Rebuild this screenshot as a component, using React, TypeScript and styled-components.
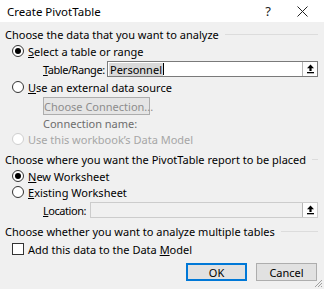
import React from 'react';
import styled, { createGlobalStyle } from 'styled-components';

const GlobalStyle = createGlobalStyle`
  html, body {
    margin: 0;
    padding: 0;
    background: #f0f0f0;
  }
  body {
    font-family: "Noto Sans", "Open Sans", sans-serif;
    font-size: 11px;
    color: #000;
  }
`;

const Window = styled.div`
  position: relative;
  width: 324px;
  height: 289px;
  background: #f0f0f0;
  overflow: hidden;
  display: flex;
  flex-direction: column;
`;

const TitleBar = styled.div`
  height: 22px;
  background: #fff;
  display: flex;
  align-items: center;
  padding: 0 5px 0 7px;
`;

const Title = styled.span`
  flex: 1;
  font-size: 11.5px;
`;

const TitleButton = styled.div`
  width: 34px;
  height: 22px;
  display: flex;
  align-items: center;
  justify-content: center;
  font-size: 13px;
  color: #222;
`;

const Body = styled.div`
  display: flex;
  flex-direction: column;
  padding: 4px 6px 0 5px;
`;

const SectionHeader = styled.div<{ $top?: number }>`
  height: 16px;
  margin-top: ${p => p.$top ?? 0}px;
  display: flex;
  align-items: center;
  gap: 6px;
  white-space: nowrap;

  &::after {
    content: '';
    flex: 1;
    height: 1px;
    background: #dcdcdc;
  }
`;

const OptionRow = styled.label<{ $top?: number; $disabled?: boolean }>`
  height: 16px;
  margin-top: ${p => p.$top ?? 0}px;
  padding-left: 7px;
  display: flex;
  align-items: center;
  gap: 4px;
  color: ${p => (p.$disabled ? '#a6a6a6' : '#000')};
  white-space: nowrap;
`;

const Radio = styled.span<{ $checked?: boolean; $disabled?: boolean }>`
  width: 12px;
  height: 12px;
  box-sizing: border-box;
  border-radius: 50%;
  border: 1px solid ${p => (p.$disabled ? '#cfcfcf' : '#333')};
  background: #fff;
  display: flex;
  align-items: center;
  justify-content: center;
  flex-shrink: 0;

  &::after {
    content: '';
    width: 6px;
    height: 6px;
    border-radius: 50%;
    background: ${p => (p.$checked ? '#000' : 'transparent')};
  }
`;

const Checkbox = styled.span`
  width: 12px;
  height: 12px;
  box-sizing: border-box;
  border: 1px solid #333;
  background: #fff;
  flex-shrink: 0;
`;

const FieldRow = styled.div<{ $top?: number; $label: number }>`
  height: 16px;
  margin-top: ${p => p.$top ?? 0}px;
  padding-left: 38px;
  display: grid;
  grid-template-columns: ${p => p.$label}px 1fr;
  align-items: center;
  white-space: nowrap;
`;

const FieldLabel = styled.span`
  letter-spacing: -0.45px;
`;

const Input = styled.div<{ $disabled?: boolean }>`
  height: 16px;
  box-sizing: border-box;
  border: 1px solid ${p => (p.$disabled ? '#cccccc' : '#7a7a7a')};
  background: ${p => (p.$disabled ? '#f0f0f0' : '#fff')};
  display: flex;
  align-items: center;
  padding-left: 1px;
`;

const InputText = styled.span`
  flex: 1;
  display: flex;
  align-items: center;
`;

const Selected = styled.span`
  background: #d9d9d9;
  padding: 0 1px;
  line-height: 13px;
`;

const Caret = styled.span`
  width: 1px;
  height: 12px;
  background: #000;
`;

const PickButton = styled.span`
  width: 15px;
  height: 14px;
  box-sizing: border-box;
  border-left: 1px solid #b5b5b5;
  background: #fdfdfd;
  display: flex;
  align-items: center;
  justify-content: center;
`;

const IndentBlock = styled.div<{ $top?: number }>`
  padding-left: 38px;
  margin-top: ${p => p.$top ?? 0}px;
  display: flex;
  flex-direction: column;
  align-items: flex-start;
`;

const PushButton = styled.button<{ $default?: boolean; $width: number; $disabled?: boolean }>`
  width: ${p => p.$width}px;
  height: 18px;
  box-sizing: border-box;
  margin: 0;
  padding: 0;
  flex-shrink: 0;
  text-align: center;
  white-space: nowrap;
  font-family: inherit;
  font-size: 11px;
  color: ${p => (p.$disabled ? '#8d8d8d' : '#000')};
  background: ${p => (p.$disabled ? '#e5e5e5' : '#e1e1e1')};
  border: 1px solid ${p => (p.$default ? '#0078d7' : '#adadad')};
  box-shadow: ${p => (p.$default ? 'inset 0 0 0 1px #0078d7' : 'none')};
`;

const Hint = styled.div`
  height: 16px;
  display: flex;
  align-items: center;
  color: #6d6d6d;
`;

const Footer = styled.div`
  margin-top: 6px;
  display: flex;
  justify-content: flex-end;
  gap: 9px;
  padding-right: 1px;
`;

const Grip = styled.svg`
  position: absolute;
  right: 1px;
  bottom: 1px;
`;

const U = styled.span`
  text-decoration: underline;
  text-underline-offset: 1px;
`;

const UpArrow = () => (
  <svg width="9" height="10" viewBox="0 0 9 10">
    <path d="M4.5 0.5 L8 4.2 L5.6 4.2 L5.6 7 L3.4 7 L3.4 4.2 L1 4.2 Z" fill="#000" />
    <rect x="1" y="8" width="7" height="1.3" fill="#000" />
  </svg>
);

export default function App() {
  return (
    <>
      <GlobalStyle />
      <Window>
        <TitleBar>
          <Title>Create PivotTable</Title>
          <TitleButton>?</TitleButton>
          <TitleButton>
            <svg width="11" height="11" viewBox="0 0 11 11">
              <path d="M0.5 0.5 L10.5 10.5 M10.5 0.5 L0.5 10.5" stroke="#222" strokeWidth="1" />
            </svg>
          </TitleButton>
        </TitleBar>
        <Body>
          <SectionHeader>Choose the data that you want to analyze</SectionHeader>
          <OptionRow $top={1}>
            <Radio $checked />
            <span><U>S</U>elect a table or range</span>
          </OptionRow>
          <FieldRow $top={2} $label={64}>
            <FieldLabel><U>T</U>able/Range:</FieldLabel>
            <Input>
              <InputText>
                <Selected>Personnel</Selected>
                <Caret />
              </InputText>
              <PickButton><UpArrow /></PickButton>
            </Input>
          </FieldRow>
          <OptionRow $top={2}>
            <Radio />
            <span><U>U</U>se an external data source</span>
          </OptionRow>
          <IndentBlock $top={2}>
            <PushButton $width={107} $disabled>Choose Connection...</PushButton>
            <Hint>Connection name:</Hint>
          </IndentBlock>
          <OptionRow $disabled>
            <Radio $disabled />
            <span>Use this workbook’s Data Model</span>
          </OptionRow>
          <SectionHeader $top={4}>Choose where you want the PivotTable report to be placed</SectionHeader>
          <OptionRow $top={1}>
            <Radio $checked />
            <span><U>N</U>ew Worksheet</span>
          </OptionRow>
          <OptionRow>
            <Radio />
            <span><U>E</U>xisting Worksheet</span>
          </OptionRow>
          <FieldRow $top={2} $label={47}>
            <FieldLabel><U>L</U>ocation:</FieldLabel>
            <Input $disabled>
              <InputText />
              <PickButton><UpArrow /></PickButton>
            </Input>
          </FieldRow>
          <SectionHeader $top={5}>Choose whether you want to analyze multiple tables</SectionHeader>
          <OptionRow $top={2}>
            <Checkbox />
            <span>Add this data to the Data <U>M</U>odel</span>
          </OptionRow>
          <Footer>
            <PushButton $default $width={61}>OK</PushButton>
            <PushButton $width={61}>Cancel</PushButton>
          </Footer>
        </Body>
        <Grip width="10" height="10" viewBox="0 0 10 10">
          <path d="M9 2 L2 9 M9 5 L5 9 M9 8 L8 9" stroke="#a0a0a0" strokeWidth="1" />
        </Grip>
      </Window>
    </>
  );
}
